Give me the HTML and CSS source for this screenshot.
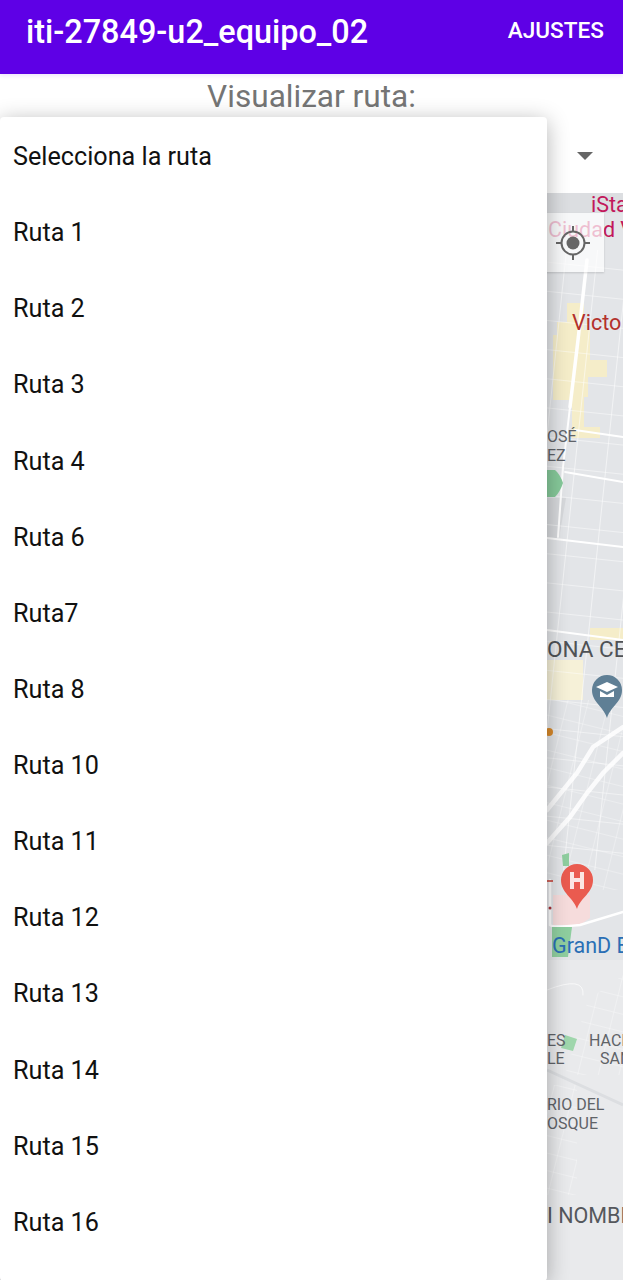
FILE: index.html
```html
<!DOCTYPE html>
<html lang="es">
<head>
    <meta charset="UTF-8">
    <meta name="viewport" content="width=device-width, initial-scale=1.0">
    <title>iti-27849-u2_equipo_02</title>
    <link rel="stylesheet" href="styles.css">
</head>
<body>
    <div class="app">
        <header class="app-bar">
            <span class="app-title">iti-27849-u2_equipo_02</span>
            <span class="app-action">AJUSTES</span>
        </header>

        <p class="route-label">Visualizar ruta:</p>

        <div class="spinner">
            <span class="spinner-arrow"></span>
        </div>

        <div class="map">
            <svg class="map-canvas" viewBox="0 193 623 1087" xmlns="http://www.w3.org/2000/svg">
                <defs>
                    <pattern id="blocks" width="31" height="29" patternUnits="userSpaceOnUse" patternTransform="rotate(6)">
                        <path d="M0 0H31M0 0V29" fill="none" stroke="#fff" stroke-opacity=".9" stroke-width="1.2"/>
                    </pattern>
                    <pattern id="blocks-thin" width="20" height="17" patternUnits="userSpaceOnUse" patternTransform="rotate(14)">
                        <path d="M0 0H20M0 0V17" fill="none" stroke="#fff" stroke-opacity=".6" stroke-width="1"/>
                    </pattern>
                </defs>

                <!-- fondo -->
                <rect x="0" y="193" width="623" height="1087" fill="#e3e5e8"/>
                <rect x="0" y="960" width="623" height="320" fill="#e9eaec"/>
                <rect x="547" y="193" width="76" height="20" fill="#dcdee1"/>

                <!-- zonas -->
                <path d="M567 303H584V330H590V360H607V377H588V397H584V427H600V438H572V400H553V335H557V322H567Z" fill="#f5edc9"/>
                <path d="M547 660H583V700H547Z" fill="#f6f1d8"/>
                <path d="M590 628H623V640H590Z" fill="#f5edc9"/>
                <path d="M547 498H566L559 538H547Z" fill="#d7d9dc"/>
                <path d="M553 895H590V918L580 925H553Z" fill="#f6dcdc"/>

                <!-- manzanas -->
                <rect x="547" y="250" width="76" height="620" fill="url(#blocks)"/>
                <rect x="547" y="700" width="76" height="190" fill="url(#blocks-thin)"/>
                <path d="M588 1000L623 975V1075L565 1075Z" fill="url(#blocks-thin)"/>
                <rect x="547" y="1085" width="30" height="110" fill="url(#blocks-thin)"/>

                <!-- avenidas -->
                <g fill="none" stroke="#fff" stroke-linecap="round">
                    <path d="M587 260L578 340L570 407" stroke-width="3.5"/>
                    <path d="M570 407L563 467L558 537" stroke-width="2"/>
                    <path d="M547 538L623 547M575 430L623 437M565 472L623 482M547 630L623 640" stroke-width="1.8"/>
                    <path d="M623 727L593 747L577 773L547 810" stroke-width="4.5" stroke-opacity=".85"/>
                    <path d="M623 753L603 773L587 793L570 817L547 843" stroke-width="4.5" stroke-opacity=".85"/>
                    <path d="M550 880V925Q552 928 580 925L623 912" stroke-width="2.5"/>
                    <path d="M547 990Q585 975 583 995" stroke-width="1" stroke-opacity=".7"/>
                </g>
                <path d="M547 1070L623 1105" fill="none" stroke="#dcdee1" stroke-width="3"/>

                <!-- parques -->
                <path d="M547 470H555Q560 474 563 483Q560 492 555 497H547Z" fill="#86c99a"/>
                <path d="M562 855L569 853V866H563Z" fill="#8fce9f"/>
                <path d="M552 927H572L568 957H552Z" fill="#8fce9f"/>
                <path d="M565 1035L577 1039L573 1051L561 1048Z" fill="#9fd6ac"/>

                <!-- marcadores -->
                <path d="M607 718C603 706 592 702 592 690A15 15 0 0 1 622 690C622 702 611 706 607 718Z" fill="#5f7f95"/>
                <path d="M596 687L607 682L618 687L607 692ZM600 691L607 695L614 691V697H600Z" fill="#fff"/>
                <path d="M577 909C573 897 561 893 561 880A16 16 0 0 1 593 880C593 893 581 897 577 909Z" fill="#ea5b4f"/>
                <path d="M570 872H574V878H580V872H584V889H580V882H574V889H570Z" fill="#fbe6e3"/>
                <circle cx="549" cy="732" r="4" fill="#d98a2b"/>
                <path d="M547 881H553" stroke="#c5372c" stroke-width="1.5"/>
                <circle cx="550" cy="908" r="1.5" fill="#a8323a"/>

                <!-- textos del mapa -->
                <g font-family="Roboto, sans-serif">
                    <text x="591" y="212" font-size="21.5" fill="#c2185b">iSta</text>
                    <text x="548" y="237" font-size="21.5" fill="#c2185b">Ciudad V</text>
                    <text x="572" y="330" font-size="21.5" fill="#b3312c">Victo</text>
                    <text x="547" y="442" font-size="16" fill="#5f6368">OSÉ</text>
                    <text x="547" y="461" font-size="16" fill="#5f6368">EZ</text>
                    <text x="547" y="657" font-size="22.5" fill="#4f5256">ONA CEN</text>
                    <text x="552" y="953" font-size="21.5" fill="#2a6fb5">GranD B</text>
                    <text x="547" y="1046" font-size="16" fill="#5f6368">ES</text>
                    <text x="547" y="1064" font-size="16" fill="#5f6368">LE</text>
                    <text x="589" y="1046" font-size="16" fill="#5f6368">HACI</text>
                    <text x="600" y="1064" font-size="16" fill="#5f6368">SAN</text>
                    <text x="547" y="1110" font-size="16" fill="#5f6368">RIO DEL</text>
                    <text x="547" y="1129" font-size="16" fill="#5f6368">OSQUE</text>
                    <text x="547" y="1223" font-size="21.5" fill="#55585c">I NOMBR</text>
                </g>
            </svg>

            <div class="location-btn">
                <svg width="36" height="36" viewBox="0 0 36 36" xmlns="http://www.w3.org/2000/svg">
                    <circle cx="18" cy="18" r="11.5" fill="none" stroke="#666" stroke-width="2"/>
                    <circle cx="18" cy="18" r="6.5" fill="#666"/>
                    <path d="M18 1V6M18 30V35M1 18H6M30 18H35" stroke="#666" stroke-width="2"/>
                </svg>
            </div>
        </div>

        <ul class="route-menu">
            <li>Selecciona la ruta</li>
            <li>Ruta 1</li>
            <li>Ruta 2</li>
            <li>Ruta 3</li>
            <li>Ruta 4</li>
            <li>Ruta 6</li>
            <li>Ruta7</li>
            <li>Ruta 8</li>
            <li>Ruta 10</li>
            <li>Ruta 11</li>
            <li>Ruta 12</li>
            <li>Ruta 13</li>
            <li>Ruta 14</li>
            <li>Ruta 15</li>
            <li>Ruta 16</li>
        </ul>
    </div>
</body>
</html>
```

FILE: styles.css
```css
html, body {
    margin: 0;
    padding: 0;
}
body {
    font-family: Roboto, sans-serif;
    background: #fff;
}
.app {
    position: relative;
    display: flex;
    flex-direction: column;
    height: 1280px;
    overflow: hidden;
}
.app-bar {
    flex: none;
    display: flex;
    justify-content: space-between;
    align-items: flex-start;
    height: 74px;
    padding: 0 19px 0 26px;
    background: #5e00e6;
    color: #fff;
    box-shadow: 0 2px 4px rgba(98, 0, 238, .1);
}
.app-title {
    margin-top: 14px;
    font-size: 32.4px;
    line-height: 36px;
    font-weight: 500;
}
.app-action {
    margin-top: 17px;
    font-size: 22.6px;
    line-height: 27px;
    font-weight: 500;
}
.route-label {
    flex: none;
    margin: 0;
    height: 44px;
    font-size: 31.6px;
    line-height: 46px;
    text-align: center;
    color: #757575;
}
.spinner {
    flex: none;
    display: flex;
    justify-content: flex-end;
    align-items: center;
    height: 75px;
    padding-right: 30px;
}
.spinner-arrow {
    width: 0;
    height: 0;
    border-left: 8px solid transparent;
    border-right: 8px solid transparent;
    border-top: 8px solid #666;
}
.map {
    position: relative;
    flex: 1;
    min-height: 0;
}
.map-canvas {
    display: block;
    width: 100%;
    height: 100%;
}
.location-btn {
    position: absolute;
    top: 20px;
    left: 508px;
    display: flex;
    align-items: center;
    justify-content: center;
    width: 96px;
    height: 59px;
    padding-left: 34px;
    box-sizing: border-box;
    background: rgba(255, 255, 255, .72);
    box-shadow: 0 1px 2px rgba(0, 0, 0, .15);
}
.route-menu {
    position: absolute;
    top: 117px;
    left: 0;
    width: 547px;
    margin: 0;
    padding: 0 0 22px;
    list-style: none;
    background: #fff;
    border-radius: 4px;
    box-shadow: 0 4px 22px rgba(0, 0, 0, .3);
}
.route-menu li {
    height: 76.14px;
    padding-left: 13px;
    font-size: 25.2px;
    line-height: 79px;
    color: #111;
}
```
